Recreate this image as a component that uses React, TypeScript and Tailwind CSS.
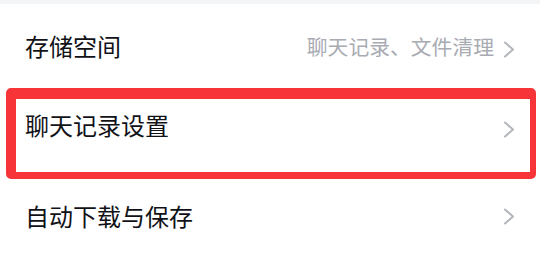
import React from 'react';

function Chevron({ className = '' }: { className?: string }) {
  return (
    <svg width="12" height="17" viewBox="0 0 12 17" className={className} fill="none">
      <polyline points="2,1.5 10,8.5 2,15.5" stroke="#b4b6bd" strokeWidth="2" strokeLinecap="round" strokeLinejoin="round" />
    </svg>
  );
}

export default function App() {
  return (
    <div
      className="w-[540px] h-[256px] overflow-hidden bg-white text-[#111217]"
      style={{ fontFamily: '"Noto Sans CJK SC", "Noto Sans", sans-serif' }}
    >
      {/* top divider */}
      <div className="h-[4px] bg-[#f4f5f7]" />

      {/* 存储空间 */}
      <div className="h-[84px] flex items-center justify-between pl-[25px] pr-[25px]">
        <span className="text-[24px] leading-none">存储空间</span>
        <div className="flex items-center gap-[9px]">
          <span className="text-[20.8px] leading-none text-[#a9abb3]">聊天记录、文件清理</span>
          <Chevron className="mt-[7px]" />
        </div>
      </div>

      {/* highlighted row */}
      <div className="ml-[6px] mr-[4px] h-[91px] rounded-[5px] border-[#f73539] border-t-[11px] border-l-[10px] border-r-[6px] border-b-[7px] flex items-start justify-between pl-[9px] pr-[15px] pt-[14px]">
        <span className="text-[24px] leading-none">聊天记录设置</span>
        <Chevron className="mt-[8px]" />
      </div>

      {/* 自动下载与保存 */}
      <div className="h-[74px] flex items-center justify-between pl-[25px] pr-[25px]">
        <span className="text-[24px] leading-none">自动下载与保存</span>
        <Chevron />
      </div>
    </div>
  );
}
